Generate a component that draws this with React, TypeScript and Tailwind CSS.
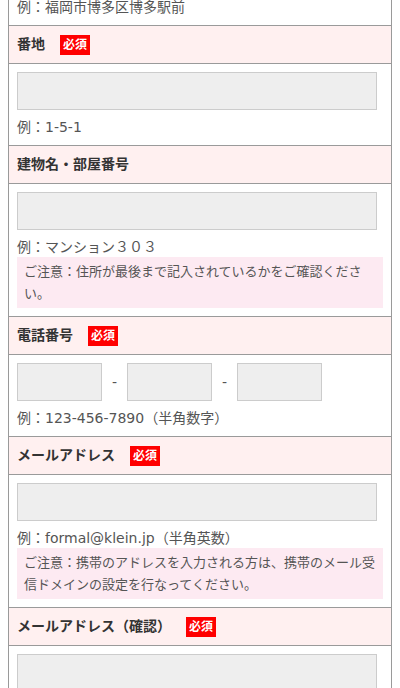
import type { ReactNode } from 'react'

// Verdana-like Latin (as Meiryo renders it), Japanese from Noto
const FONT = { fontFamily: '"DejaVu Sans", "Noto Sans CJK JP", sans-serif' }

function Badge() {
  return (
    <span className="ml-[15px] inline-flex h-[20px] w-[30px] items-center justify-center bg-[#ff0000] text-[12px] font-bold leading-none text-white">
      必須
    </span>
  )
}

function Header({ label, required }: { label: string; required?: boolean }) {
  return (
    <div className="flex h-[39px] items-center border-y border-[#9a9a9a] bg-[#fff0f0] pl-2 text-[14px] font-bold text-[#333]">
      <span>{label}</span>
      {required && <Badge />}
    </div>
  )
}

function TextInput({ className = 'w-[360px]' }: { className?: string }) {
  return (
    <input
      type="text"
      className={`block h-[38px] border border-[#cccccc] bg-[#eeeeee] outline-none ${className}`}
    />
  )
}

function Example({ children }: { children: ReactNode }) {
  return <p className="mt-[7px] text-[14px] leading-[20px] text-[#555]">{children}</p>
}

function Notice({ children }: { children: ReactNode }) {
  return (
    <p className="bg-[#fdeaf2] px-[7px] py-[4px] text-[13px] leading-[21.5px] text-[#555]">
      {children}
    </p>
  )
}

function Field({
  label,
  required,
  children,
}: {
  label: string
  required?: boolean
  children: ReactNode
}) {
  return (
    <section>
      <Header label={label} required={required} />
      <div className="px-2 pb-[8px] pt-[8px]">{children}</div>
    </section>
  )
}

export default function App() {
  return (
    <div className="min-h-[688px] bg-white" style={FONT}>
      <div className="mx-2 h-[688px] overflow-hidden border-x border-[#9a9a9a]">
        {/* tail of the previous field (address) */}
        <div className="flex h-[25px] flex-col justify-end overflow-hidden px-2 pb-[8px]">
          <p className="text-[14px] leading-[20px] text-[#555]">例：福岡市博多区博多駅前</p>
        </div>

        <Field label="番地" required>
          <TextInput />
          <Example>例：1-5-1</Example>
        </Field>

        <Field label="建物名・部屋番号">
          <TextInput />
          <Example>例：マンション３０３</Example>
          <Notice>ご注意：住所が最後まで記入されているかをご確認ください。</Notice>
        </Field>

        <Field label="電話番号" required>
          <div className="flex items-center">
            <TextInput className="w-[85px]" />
            <span className="w-[25px] text-center text-[14px] text-[#555]">-</span>
            <TextInput className="w-[85px]" />
            <span className="w-[25px] text-center text-[14px] text-[#555]">-</span>
            <TextInput className="w-[85px]" />
          </div>
          <Example>例：123-456-7890（半角数字）</Example>
        </Field>

        <Field label="メールアドレス" required>
          <TextInput />
          <Example>例：formal@klein.jp（半角英数）</Example>
          <Notice>
            ご注意：携帯のアドレスを入力される方は、携帯のメール受信ドメインの設定を行なってください。
          </Notice>
        </Field>

        <Field label="メールアドレス（確認）" required>
          <TextInput />
        </Field>
      </div>
    </div>
  )
}
